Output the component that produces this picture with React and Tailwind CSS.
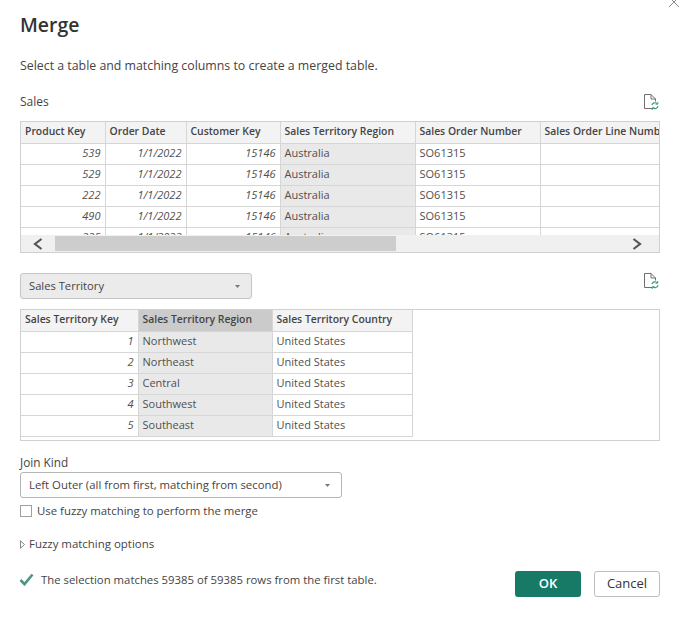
import React from 'react';

const salesCols = ['Product Key', 'Order Date', 'Customer Key', 'Sales Territory Region', 'Sales Order Number', 'Sales Order Line Number'];
const salesWidths = ['w-[84px]', 'w-[81px]', 'w-[94px]', 'w-[135px]', 'w-[125px]', 'w-[161px]'];
const salesRows = [
  ['539', '1/1/2022', '15146', 'Australia', 'SO61315', ''],
  ['529', '1/1/2022', '15146', 'Australia', 'SO61315', ''],
  ['222', '1/1/2022', '15146', 'Australia', 'SO61315', ''],
  ['490', '1/1/2022', '15146', 'Australia', 'SO61315', ''],
  ['225', '1/1/2022', '15146', 'Australia', 'SO61315', ''],
];
const territoryRows = [
  ['1', 'Northwest'],
  ['2', 'Northeast'],
  ['3', 'Central'],
  ['4', 'Southwest'],
  ['5', 'Southeast'],
];

const FileRefresh = () => (
  <svg width="18" height="18" viewBox="0 0 18 18" fill="none">
    <path d="M10.5 15.5H2.5V1.5H9L13.5 6V8.5M9 1.5V6H13.5" stroke="#6f6f6f" strokeWidth="1" />
    <path d="M10 12.2a3 3 0 0 1 5-1.6M16 13.2a3 3 0 0 1-5 1.6" stroke="#3f9a84" strokeWidth="1.2" />
    <path d="M15.8 9v2.2h-2.2M10.2 17v-2.2h2.2" stroke="#3f9a84" strokeWidth="1" />
  </svg>
);

const Caret = () => (
  <svg width="5" height="3" viewBox="0 0 7 4"><path d="M0 0h7L3.5 4z" fill="#777" /></svg>
);

const HeaderCell = ({ children, className = '' }) => (
  <th className={`h-[21px] border-r border-b border-[#d6d6d6] bg-[#f3f3f3] px-[4px] text-left text-[10.4px] font-semibold whitespace-nowrap overflow-hidden text-[#444] ${className}`}>
    {children}
  </th>
);

const Cell = ({ children, className = '' }) => (
  <td className={`h-[21px] border-r border-b border-[#d6d6d6] px-[4px] text-[11px] whitespace-nowrap overflow-hidden text-[#505050] ${className}`}>
    {children}
  </td>
);

export default function App() {
  return (
    <div className="relative h-[624px] w-[689px] overflow-hidden bg-white px-5 font-['Open_Sans',sans-serif] text-[#444]">
      <button className="absolute top-[-4px] right-[9px] text-[#777]" aria-label="Close">
        <svg width="12" height="12" viewBox="0 0 12 12"><path d="M1 1l10 10M11 1L1 11" stroke="#8a8a8a" strokeWidth="1" /></svg>
      </button>

      <h1 className="pt-[10px] text-[19.4px] leading-[30px] font-semibold text-[#333]">Merge</h1>
      <p className="mt-[17px] text-[12.35px] leading-[18px]">Select a table and matching columns to create a merged table.</p>

      <div className="mt-[15px] flex h-[24px] w-[640px] items-center justify-between">
        <span className="text-[12px] leading-[18px]">Sales</span>
        <FileRefresh />
      </div>

      <div className="mt-[7px] w-[640px] border border-[#d0d0d0]">
        <div className="h-[113px] overflow-hidden">
          <table className="w-[680px] table-fixed border-collapse">
            <thead>
              <tr>
                {salesCols.map((c, i) => (
                  <HeaderCell key={c} className={salesWidths[i]}>{c}</HeaderCell>
                ))}
              </tr>
            </thead>
            <tbody>
              {salesRows.map((r, i) => (
                <tr key={i}>
                  <Cell className="text-right italic">{r[0]}</Cell>
                  <Cell className="text-right italic">{r[1]}</Cell>
                  <Cell className="text-right italic">{r[2]}</Cell>
                  <Cell className="bg-[#e9e9e9]">{r[3]}</Cell>
                  <Cell>{r[4]}</Cell>
                  <Cell>{r[5]}</Cell>
                </tr>
              ))}
            </tbody>
          </table>
        </div>
        <div className="flex h-[17px] items-center bg-[#f0f0f0]">
          <div className="flex w-[34px] justify-center">
            <svg width="12" height="12" viewBox="0 0 12 12"><path d="M9.5 1L3 6l6.5 5" fill="none" stroke="#555" strokeWidth="2.2" /></svg>
          </div>
          <div className="h-[15px] w-[341px] bg-[#cdcdcd]" />
          <div className="ml-auto flex w-[44px] justify-center">
            <svg width="12" height="12" viewBox="0 0 12 12"><path d="M2.5 1L9 6l-6.5 5" fill="none" stroke="#555" strokeWidth="2.2" /></svg>
          </div>
        </div>
      </div>

      <div className="mt-[20px] flex h-[26px] w-[640px] items-start justify-between">
        <div className="flex h-[26px] w-[232px] items-center justify-between rounded-[3px] border border-[#c4c4c4] bg-[#ebebeb] pr-[11px] pl-[8px] text-[11.2px]">
          <span>Sales Territory</span>
          <Caret />
        </div>
        <div className="mt-[-1px]"><FileRefresh /></div>
      </div>

      <div className="mt-[10px] h-[132px] w-[640px] border border-[#d0d0d0]">
        <table className="w-[391px] table-fixed border-collapse">
          <thead>
            <tr>
              <HeaderCell className="w-[117px]">Sales Territory Key</HeaderCell>
              <HeaderCell className="w-[134px] !bg-[#cbcbcb]">Sales Territory Region</HeaderCell>
              <HeaderCell className="w-[140px]">Sales Territory Country</HeaderCell>
            </tr>
          </thead>
          <tbody>
            {territoryRows.map((r) => (
              <tr key={r[0]}>
                <Cell className="text-right italic">{r[0]}</Cell>
                <Cell className="bg-[#e9e9e9]">{r[1]}</Cell>
                <Cell>United States</Cell>
              </tr>
            ))}
          </tbody>
        </table>
      </div>

      <div className="mt-[13px] text-[11.8px] leading-[16px]">Join Kind</div>
      <div className="mt-[2px] flex h-[26px] w-[322px] items-center justify-between rounded-[3px] border border-[#b5b5b5] bg-white pr-[11px] pl-[8px] text-[11.35px]">
        <span>Left Outer (all from first, matching from second)</span>
        <Caret />
      </div>

      <label className="mt-[5px] flex h-[16px] items-center gap-[5px] text-[11.4px]">
        <span className="h-[12px] w-[12px] border border-[#a0a0a0] bg-white" />
        <span>Use fuzzy matching to perform the merge</span>
      </label>

      <div className="mt-[17px] flex h-[16px] items-center gap-[4px] text-[11.45px]">
        <svg width="5" height="9" viewBox="0 0 5 9"><path d="M.5.8l4 3.7-4 3.7z" fill="none" stroke="#666" strokeWidth="0.8" /></svg>
        <span>Fuzzy matching options</span>
      </div>

      <div className="mt-[19px] flex w-[640px] items-start justify-between">
        <div className="flex items-center gap-[7px] text-[11.35px]">
          <svg width="15" height="13" viewBox="0 0 15 13" className="ml-[-1px]"><path d="M1.5 7l4 4.2L13.5 1.5" fill="none" stroke="#4f9585" strokeWidth="2.6" /></svg>
          <span>The selection matches 59385 of 59385 rows from the first table.</span>
        </div>
        <div className="flex gap-[13px]">
          <button className="h-[26px] w-[66px] rounded-[3px] bg-[#167a67] text-[13px] font-semibold text-white">OK</button>
          <button className="h-[26px] w-[66px] rounded-[3px] border border-[#bdbdbd] bg-white text-[13px] text-[#333]">Cancel</button>
        </div>
      </div>
    </div>
  );
}
